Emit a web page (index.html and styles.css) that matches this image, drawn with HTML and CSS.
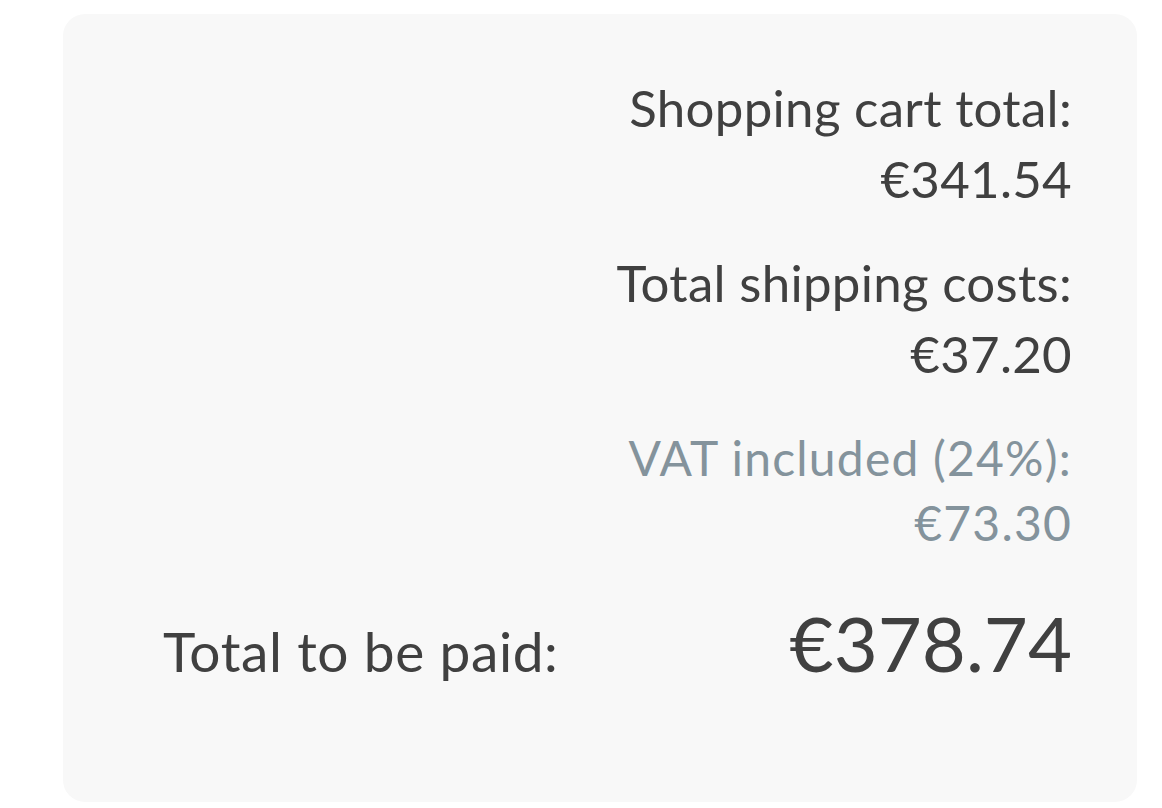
FILE: index.html
```html
<!DOCTYPE html>
<html>
<head>
<meta charset="utf-8">
<link rel="stylesheet" href="styles.css">
</head>
<body>
<div class="card">
  <div class="lines">
    <div class="item">
      <div class="label">Shopping cart total:</div>
      <div class="value">€341.54</div>
    </div>
    <div class="item">
      <div class="label">Total shipping costs:</div>
      <div class="value">€37.20</div>
    </div>
    <div class="item vat">
      <div class="label">VAT included (24%):</div>
      <div class="value">€73.30</div>
    </div>
  </div>
  <div class="total">
    <div class="total-label">Total to be paid:</div>
    <div class="total-value">€378.74</div>
  </div>
</div>
</body>
</html>
```
FILE: styles.css
```css
html, body {
  margin: 0;
  padding: 0;
  background: #ffffff;
}
body {
  font-family: "Lato", "Roboto", sans-serif;
  color: #404040;
}
.card {
  box-sizing: border-box;
  margin: 14px 0 0 63px;
  width: 1074px;
  height: 788px;
  background: #f8f8f8;
  border-radius: 22px;
  padding: 58px 65px 0 100px;
  display: flex;
  flex-direction: column;
}
.lines {
  display: flex;
  flex-direction: column;
  align-items: flex-end;
  gap: 33px;
}
.item {
  text-align: right;
  font-size: 51px;
  line-height: 71px;
  letter-spacing: 0.3px;
}
.item.vat {
  font-size: 48px;
  line-height: 65px;
  letter-spacing: 1.2px;
  color: #84939c;
  margin-top: 3px;
}
.total {
  display: flex;
  justify-content: space-between;
  align-items: baseline;
  margin-top: 42px;
}
.total-label {
  font-size: 55px;
  letter-spacing: 0.6px;
}
.total-value {
  font-size: 76px;
}
```
